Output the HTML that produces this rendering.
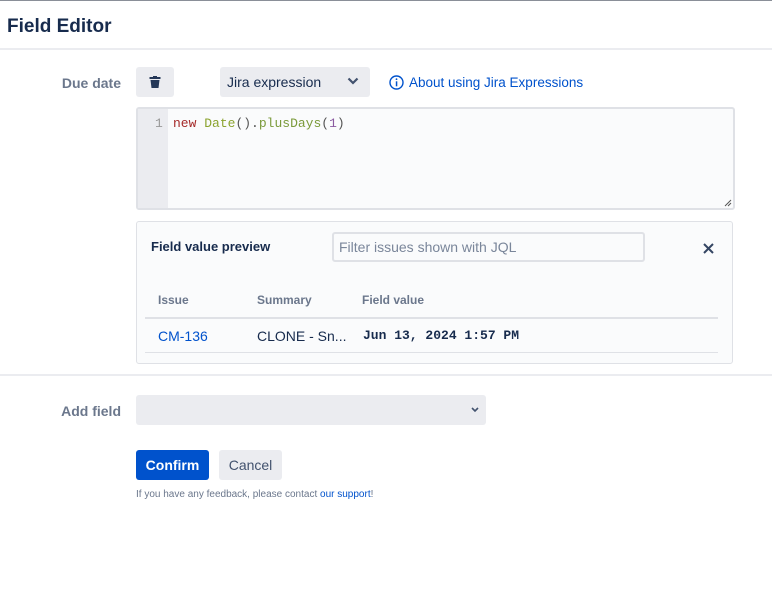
<!DOCTYPE html>
<html><head><meta charset="utf-8"><style>
*{box-sizing:border-box;margin:0;padding:0}
body{width:772px;height:589px;background:#fff;font-family:"Liberation Sans",sans-serif;color:#172B4D;position:relative;overflow:hidden}
.a{position:absolute}
.lbl{font-size:14px;color:#6b778c;font-weight:bold;text-align:right;width:100px}
.mono{font-family:"Liberation Mono",monospace}
</style></head><body>
<div class="a" style="left:0;top:0;width:772px;height:1px;background:#8a8f98"></div>
<div class="a" style="left:7px;top:16px;font-size:19px;font-weight:bold;color:#172B4D">Field Editor</div>
<div class="a" style="left:0;top:48px;width:772px;height:2px;background:#ebecf0"></div>

<div class="a lbl" style="left:21px;top:75px">Due date</div>
<div class="a" style="left:136px;top:67px;width:38px;height:30px;background:#ebecf0;border-radius:3px">
<svg class="a" style="left:13px;top:9px" width="12" height="12" viewBox="0 0 12 12"><rect x="0.5" y="1" width="11" height="2" fill="#253858"/><rect x="4" y="0" width="4" height="2" fill="#253858"/><path d="M1.5 4h9l-1 8h-7z" fill="#253858"/></svg></div>
<div class="a" style="left:220px;top:67px;width:150px;height:30px;background:#ebecf0;border-radius:3px;font-size:14px;padding:7px 7px;color:#172B4D">Jira expression
<svg class="a" style="left:127px;top:10px" width="12" height="9" viewBox="0 0 12 9"><path d="M1.5 1.5l4.5 4.5l4.5-4.5" stroke="#42526e" stroke-width="2.2" fill="none"/></svg></div>
<svg class="a" style="left:389px;top:75px" width="15" height="15" viewBox="0 0 15 15"><circle cx="7.5" cy="7.5" r="6.5" stroke="#0052cc" stroke-width="1.4" fill="none"/><rect x="6.8" y="6.3" width="1.5" height="5" fill="#0052cc"/><circle cx="7.5" cy="4.2" r="0.9" fill="#0052cc"/></svg>
<div class="a" style="left:409px;top:75px;font-size:13.5px;color:#0052cc">About using Jira Expressions</div>

<div class="a" style="left:136px;top:107px;width:599px;height:103px;border:2px solid #dfe1e6;background:#fafbfc;border-radius:3px">
<div class="a" style="left:0;top:0;width:30px;height:99px;background:#ebecf0"></div>
<div class="a mono" style="left:17px;top:7px;font-size:13px;color:#999">1</div>
<div class="a mono" style="left:35px;top:7px;font-size:13px;white-space:pre"><span style="color:#a52a2a">new</span> <span style="color:#8ba32e">Date</span><span style="color:#555">()</span><span style="color:#555">.</span><span style="color:#7a9a3a">plusDays</span><span style="color:#555">(</span><span style="color:#8a5aa0">1</span><span style="color:#555">)</span></div>
<svg class="a" style="right:1px;bottom:1px" width="8" height="8"><path d="M1 7L7 1M4 7L7 4" stroke="#555" stroke-width="1"/></svg>
</div>

<div class="a" style="left:136px;top:221px;width:597px;height:143px;border:1px solid #dfe1e6;background:#fafbfc;border-radius:3px">
<div class="a" style="left:14px;top:17px;font-size:13px;font-weight:bold">Field value preview</div>
<div class="a" style="left:195px;top:10px;width:313px;height:30px;border:2px solid #dfe1e6;background:#fafbfc;border-radius:3px;font-size:14px;color:#7a869a;padding:5px 5px">Filter issues shown with JQL</div>
<svg class="a" style="left:566px;top:21px" width="11" height="11"><path d="M1 1L10 10M10 1L1 10" stroke="#344563" stroke-width="2"/></svg>
<div class="a" style="left:21px;top:71px;font-size:12px;color:#6b778c;font-weight:bold">Issue</div>
<div class="a" style="left:120px;top:71px;font-size:12px;color:#6b778c;font-weight:bold">Summary</div>
<div class="a" style="left:225px;top:71px;font-size:12px;color:#6b778c;font-weight:bold">Field value</div>
<div class="a" style="left:8px;top:95px;width:573px;height:2px;background:#dfe1e6"></div>
<div class="a" style="left:21px;top:106px;font-size:14px;color:#0052cc">CM-136</div>
<div class="a" style="left:120px;top:106px;font-size:14px">CLONE - Sn...</div>
<div class="a mono" style="left:226px;top:106px;font-size:13px;font-weight:bold">Jun 13, 2024 1:57 PM</div>
<div class="a" style="left:8px;top:130px;width:573px;height:1px;background:#dfe1e6"></div>
</div>

<div class="a" style="left:0;top:374px;width:772px;height:2px;background:#ebecf0"></div>
<div class="a lbl" style="left:21px;top:403px">Add field</div>
<div class="a" style="left:136px;top:395px;width:350px;height:30px;background:#ebecf0;border-radius:3px">
<svg class="a" style="left:335px;top:12px" width="8" height="6"><path d="M1 1l3 3l3-3" stroke="#42526e" stroke-width="1.6" fill="none"/></svg></div>
<div class="a" style="left:136px;top:450px;width:73px;height:30px;background:#0052cc;border-radius:3px;color:#fff;font-size:14px;font-weight:bold;text-align:center;line-height:30px">Confirm</div>
<div class="a" style="left:219px;top:450px;width:63px;height:30px;background:#ebecf0;border-radius:3px;color:#42526e;font-size:14px;text-align:center;line-height:30px">Cancel</div>
<div class="a" style="left:136px;top:489px;font-size:10px;color:#6b778c">If you have any feedback, please contact <span style="color:#0052cc">our support</span>!</div>
</body></html>
